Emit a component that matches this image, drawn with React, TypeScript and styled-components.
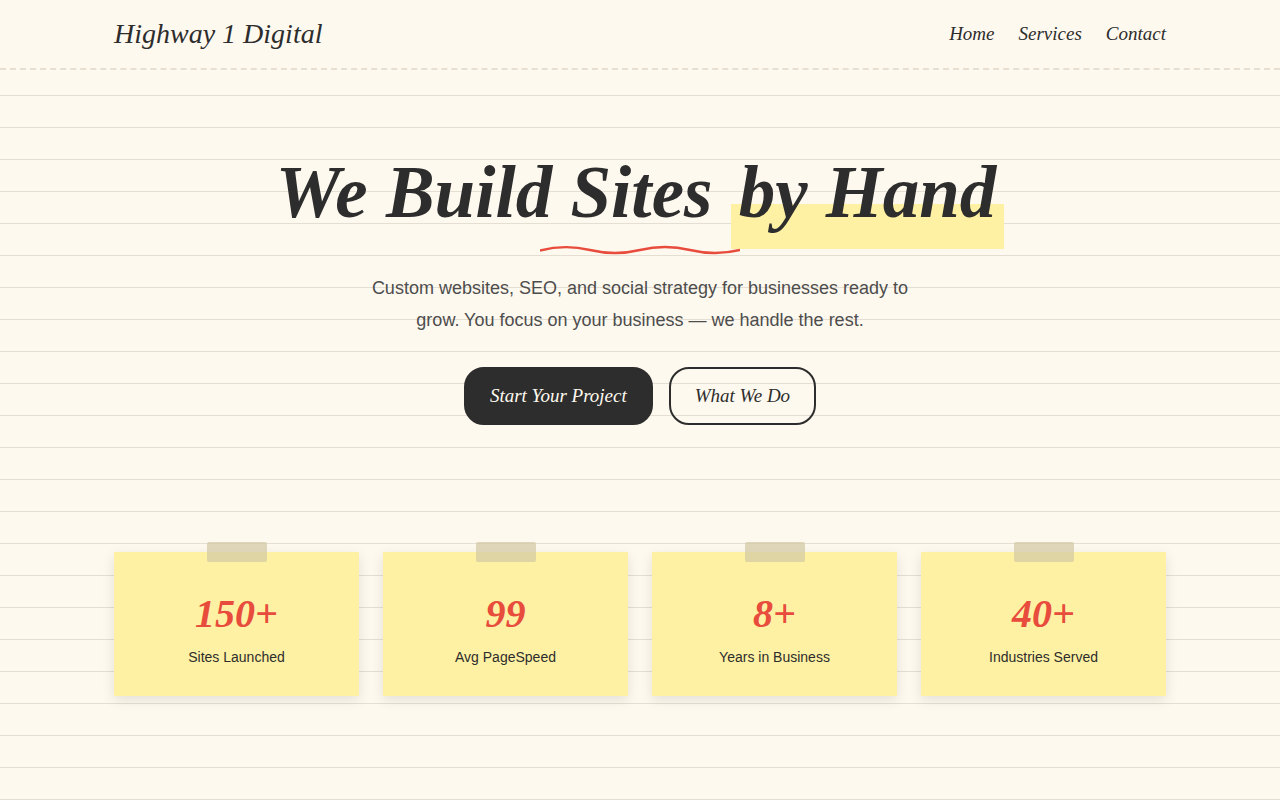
import React from "react";
import styled, { createGlobalStyle } from "styled-components";

const ink = "#2d2d2d";
const paper = "#fef9ef";
const rule = "#e5dfd3";
const red = "#e74c3c";
const note = "#fff1a3";
const script = `"Apple Chancery", "Liberation Serif", serif`;

const GlobalStyle = createGlobalStyle`
  * { box-sizing: border-box; }
  body {
    margin: 0;
    min-height: 100vh;
    color: ${ink};
    font-family: "Liberation Sans", Helvetica, Arial, sans-serif;
    background: ${paper} repeating-linear-gradient(
      transparent 0, transparent 31px, ${rule} 31px, ${rule} 32px
    );
  }
`;

const Header = styled.header`
  background: ${paper};
  border-bottom: 2px dashed #e8dfd0;
`;

const Container = styled.div`
  max-width: 1100px;
  margin: 0 auto;
  padding: 0 24px;
`;

const Bar = styled(Container)`
  display: flex;
  align-items: center;
  justify-content: space-between;
  min-height: 68px;
`;

const Logo = styled.a`
  font: italic 400 28px/36px ${script};
  color: ${ink};
  text-decoration: none;
`;

const Nav = styled.nav`
  display: flex;
  gap: 24px;
`;

const NavLink = styled.a`
  font: italic 400 19px/32px ${script};
  color: ${ink};
  text-decoration: none;
`;

const Hero = styled.section`
  display: flex;
  flex-direction: column;
  align-items: center;
  padding: 67px 24px 127px;
  text-align: center;
`;

const Title = styled.h1`
  margin: 0;
  font: italic 700 73px/112px ${script};
`;

const Highlight = styled.span`
  display: inline-block;
  padding: 0 8px;
  background: linear-gradient(transparent 60%, ${note} 60%);
`;

const Wave = styled.svg`
  display: block;
  width: 200px;
  height: 12px;
  margin-top: -6px;
`;

const Lead = styled.p`
  max-width: 560px;
  margin: 17px 0 31px;
  color: #4d4d4d;
  font-size: 18px;
  line-height: 32px;
`;

const Actions = styled.div`
  display: flex;
  flex-wrap: wrap;
  justify-content: center;
  gap: 16px;
`;

const Button = styled.button<{ $solid?: boolean }>`
  padding: 12px 24px;
  border: 2px solid ${ink};
  border-radius: 20px;
  background: ${(p) => (p.$solid ? ink : "transparent")};
  color: ${(p) => (p.$solid ? paper : ink)};
  font: italic 400 19px/30px ${script};
  cursor: pointer;
`;

const Stats = styled(Container)`
  display: grid;
  grid-template-columns: repeat(auto-fit, minmax(200px, 1fr));
  gap: 24px;
  padding-bottom: 64px;
`;

const Card = styled.article`
  position: relative;
  padding: 32px 24px 26px;
  background: ${note};
  box-shadow: 0 4px 12px rgba(0, 0, 0, 0.1);
  text-align: center;

  &::before {
    content: "";
    position: absolute;
    top: -10px;
    left: 50%;
    width: 60px;
    height: 20px;
    margin-left: -30px;
    border-radius: 2px;
    background: rgba(210, 199, 163, 0.7);
  }
`;

const Figure = styled.div`
  color: ${red};
  font: italic 700 40px/60px ${script};
`;

const Label = styled.div`
  font-size: 14px;
  line-height: 26px;
`;

const stats = [
  { figure: "150+", label: "Sites Launched" },
  { figure: "99", label: "Avg PageSpeed" },
  { figure: "8+", label: "Years in Business" },
  { figure: "40+", label: "Industries Served" },
];

export default function App() {
  return (
    <>
      <GlobalStyle />
      <Header>
        <Bar>
          <Logo href="#home">Highway 1 Digital</Logo>
          <Nav aria-label="Main">
            <NavLink href="#home">Home</NavLink>
            <NavLink href="#services">Services</NavLink>
            <NavLink href="#contact">Contact</NavLink>
          </Nav>
        </Bar>
      </Header>
      <main>
        <Hero id="home">
          <Title>
            We Build Sites <Highlight>by Hand</Highlight>
          </Title>
          <Wave viewBox="0 0 200 12" fill="none" aria-hidden="true">
            <path
              d="M0 7.5 Q25 1 50 7 T100 7 T150 7 T200 7"
              stroke={red}
              strokeWidth="2.4"
            />
          </Wave>
          <Lead>
            Custom websites, SEO, and social strategy for businesses ready to grow. You focus on
            your business — we handle the rest.
          </Lead>
          <Actions>
            <Button $solid>Start Your Project</Button>
            <Button>What We Do</Button>
          </Actions>
        </Hero>
        <Stats as="section" id="services">
          {stats.map((s) => (
            <Card key={s.label}>
              <Figure>{s.figure}</Figure>
              <Label>{s.label}</Label>
            </Card>
          ))}
        </Stats>
      </main>
    </>
  );
}
